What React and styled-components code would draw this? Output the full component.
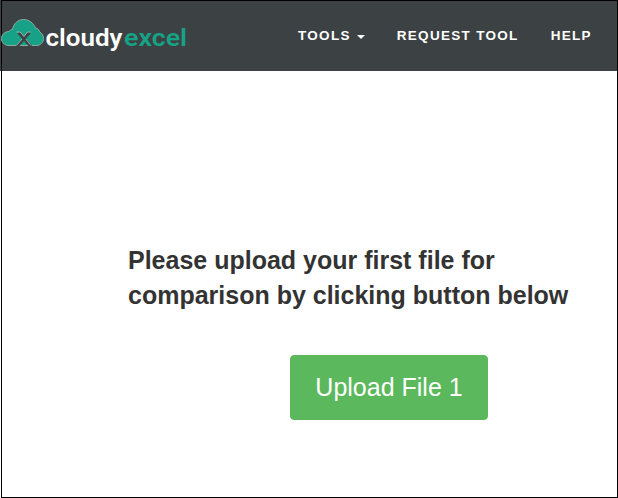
import React from "react";
import styled, { createGlobalStyle } from "styled-components";

const GlobalStyle = createGlobalStyle`
  * { box-sizing: border-box; }
  body { margin: 0; background: #fff; font-family: "Liberation Sans", Arial, sans-serif; }
`;

const Page = styled.div`
  height: 498px;
  padding-left: 1px;
  background: linear-gradient(#3c4143 71px, #fff 71px);
`;

const Frame = styled.div`
  height: 100%;
  border: 1px solid #000;
  display: flex;
  flex-direction: column;
`;

const Header = styled.header`
  height: 70px;
  flex: none;
  display: flex;
  align-items: center;
  background: #3c4143;
`;

const Logo = styled.svg`
  flex: none;
  display: block;
  width: 190px;
  height: 70px;
  margin-left: -1px;
`;

const Wordmark = styled.text`
  font-family: Roboto, sans-serif;
  font-size: 24px;
  font-weight: 600;
  fill: ${(p) => p.$color};
`;

const Nav = styled.nav`
  display: flex;
  gap: 32px;
  margin-left: 107px;
`;

const NavLink = styled.a`
  display: flex;
  align-items: center;
  color: #fff;
  font-size: 13.5px;
  font-weight: 700;
  line-height: 20px;
  letter-spacing: 1.3px;
  white-space: nowrap;
`;

const Caret = styled.span`
  margin: 2px 0 0 6px;
  border: 4px solid transparent;
  border-top-color: #fff;
  border-bottom: 0;
`;

const Main = styled.main`
  display: flex;
  flex-direction: column;
  padding: 172px 0 0 126px;
`;

const Heading = styled.h2`
  margin: 0;
  color: #333;
  font-size: 25px;
  font-weight: 700;
  line-height: 35px;
  white-space: nowrap;
`;

const UploadButton = styled.button`
  width: 198px;
  height: 65px;
  margin: 42px 0 0 162px;
  padding: 0;
  border: 1px solid #5cb85c;
  border-radius: 4px;
  background: #5cb85c;
  color: #fff;
  font: 25px "Liberation Sans", Arial, sans-serif;
`;

export default function App() {
  return (
    <Page>
      <GlobalStyle />
      <Frame>
        <Header>
          <Logo viewBox="1 1 190 70" role="img" aria-label="cloudyexcel">
            <path
              d="M9 45.500C4.500 45.500 1.500 42.500 1.500 38.500C1.500 34.500 5 31.500 9 31.500C10 30 11.500 29.500 12.500 29.500C13.500 23.500 18 19.500 23.500 19.500C29 19.500 33.500 23 35.500 28C38 28.500 39.500 30 39.500 32C42 33 43.500 35.500 43.500 38.500C43.500 42.500 40.500 45.500 36.500 45.500Z"
              fill="#17a186"
              stroke="#8fa9a5"
              strokeWidth="1"
            />
            <path d="M18.500 32.500L31 46.500M29.500 32.500L17 46.500" fill="none" stroke="#3c4143" strokeWidth="3" />
            <path d="M16.500 32H20L24 36.500L27.500 32H30.500M22 39L16.500 45.500M25.800 39L31 45.500" fill="none" stroke="#a9bab8" strokeWidth="0.900" />
            <Wordmark x="45.500" y="46" $color="#fff" textLength="77" lengthAdjust="spacingAndGlyphs">cloudy</Wordmark>
            <Wordmark x="124" y="46" $color="#17a186" textLength="63" lengthAdjust="spacingAndGlyphs">excel</Wordmark>
          </Logo>
          <Nav>
            <NavLink>TOOLS<Caret /></NavLink>
            <NavLink>REQUEST TOOL</NavLink>
            <NavLink>HELP</NavLink>
          </Nav>
        </Header>
        <Main>
          <Heading>
            Please upload your first file for
            <br />
            comparison by clicking button below
          </Heading>
          <UploadButton>Upload File 1</UploadButton>
        </Main>
      </Frame>
    </Page>
  );
}
